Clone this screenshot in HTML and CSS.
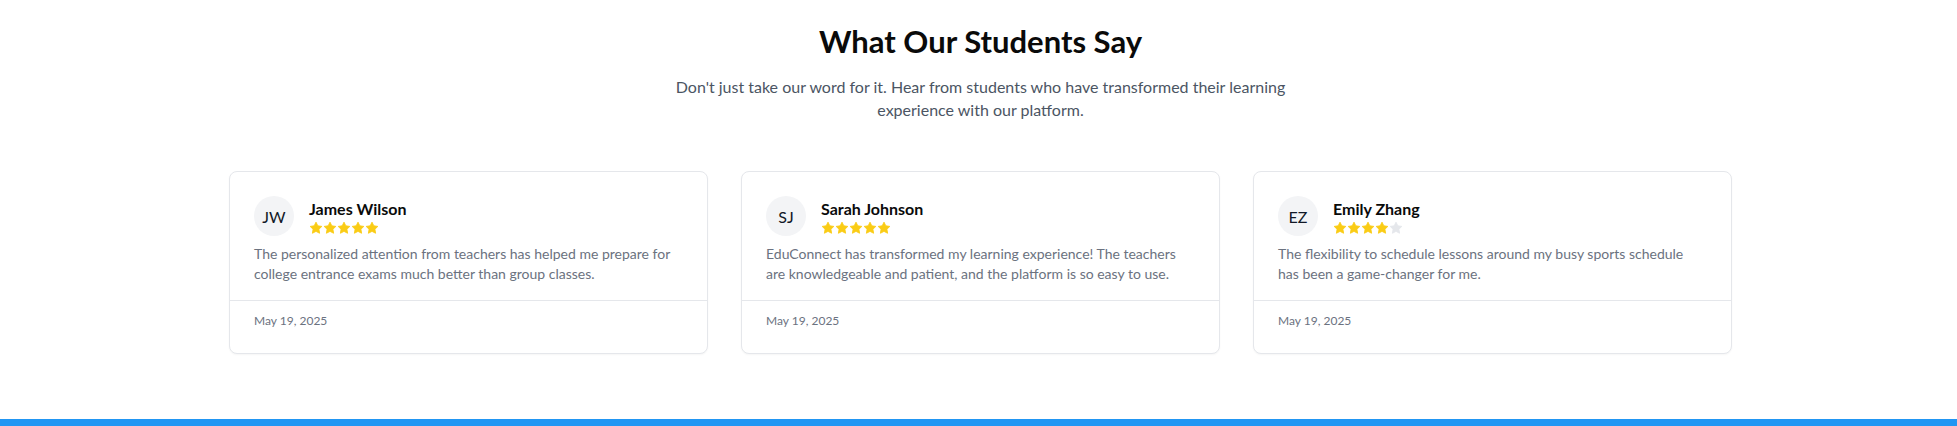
FILE: index.html
```html
<!DOCTYPE html>
<html lang="en">
<head>
<meta charset="utf-8">
<title>What Our Students Say</title>
<link rel="stylesheet" href="styles.css">
</head>
<body>
<svg width="0" height="0" class="defs" aria-hidden="true">
  <defs>
    <path id="star" d="M12 2l3.09 6.26L22 9.27l-5 4.87 1.18 6.88L12 17.77l-6.18 3.25L7 14.14 2 9.27l6.91-1.01L12 2z"/>
  </defs>
</svg>
<section class="testimonials">
  <h2 class="title">What Our Students Say</h2>
  <p class="subtitle">Don't just take our word for it. Hear from students who have transformed their learning experience with our platform.</p>
  <div class="grid">
    <article class="card">
      <div class="card-body">
        <div class="head">
          <div class="avatar">JW</div>
          <div class="who">
            <div class="name">James Wilson</div>
            <div class="stars">
              <svg class="star on" viewBox="0 0 24 24"><use href="#star"/></svg>
              <svg class="star on" viewBox="0 0 24 24"><use href="#star"/></svg>
              <svg class="star on" viewBox="0 0 24 24"><use href="#star"/></svg>
              <svg class="star on" viewBox="0 0 24 24"><use href="#star"/></svg>
              <svg class="star on" viewBox="0 0 24 24"><use href="#star"/></svg>
            </div>
          </div>
        </div>
        <p class="quote">The personalized attention from teachers has helped me prepare for college entrance exams much better than group classes.</p>
      </div>
      <div class="card-foot">May 19, 2025</div>
    </article>
    <article class="card">
      <div class="card-body">
        <div class="head">
          <div class="avatar">SJ</div>
          <div class="who">
            <div class="name">Sarah Johnson</div>
            <div class="stars">
              <svg class="star on" viewBox="0 0 24 24"><use href="#star"/></svg>
              <svg class="star on" viewBox="0 0 24 24"><use href="#star"/></svg>
              <svg class="star on" viewBox="0 0 24 24"><use href="#star"/></svg>
              <svg class="star on" viewBox="0 0 24 24"><use href="#star"/></svg>
              <svg class="star on" viewBox="0 0 24 24"><use href="#star"/></svg>
            </div>
          </div>
        </div>
        <p class="quote">EduConnect has transformed my learning experience! The teachers are knowledgeable and patient, and the platform is so easy to use.</p>
      </div>
      <div class="card-foot">May 19, 2025</div>
    </article>
    <article class="card">
      <div class="card-body">
        <div class="head">
          <div class="avatar">EZ</div>
          <div class="who">
            <div class="name">Emily Zhang</div>
            <div class="stars">
              <svg class="star on" viewBox="0 0 24 24"><use href="#star"/></svg>
              <svg class="star on" viewBox="0 0 24 24"><use href="#star"/></svg>
              <svg class="star on" viewBox="0 0 24 24"><use href="#star"/></svg>
              <svg class="star on" viewBox="0 0 24 24"><use href="#star"/></svg>
              <svg class="star off" viewBox="0 0 24 24"><use href="#star"/></svg>
            </div>
          </div>
        </div>
        <p class="quote">The flexibility to schedule lessons around my busy sports schedule has been a game-changer for me.</p>
      </div>
      <div class="card-foot">May 19, 2025</div>
    </article>
  </div>
</section>
<footer class="footer"></footer>
</body>
</html>
```
FILE: styles.css
```css
* { box-sizing: border-box; }
html, body { margin: 0; padding: 0; background: #ffffff; }
body {
  font-family: Lato, "Open Sans", "Liberation Sans", sans-serif;
  color: #111827;
  overflow: hidden;
}
.defs { position: absolute; width: 0; height: 0; }

.testimonials {
  padding: 23px 0 65px 4px;
  display: flex;
  flex-direction: column;
  align-items: center;
}
.title {
  margin: 0;
  font-size: 31px;
  line-height: 36px;
  font-weight: 700;
  color: #0a0a0a;
}
.subtitle {
  margin: 17px 0 0;
  max-width: 640px;
  text-align: center;
  font-size: 16px;
  line-height: 22.5px;
  color: #4b5563;
}
.grid {
  margin-top: 50px;
  width: 1503px;
  display: grid;
  grid-template-columns: repeat(3, 1fr);
  gap: 33px;
}
.card {
  border: 1px solid #e5e7eb;
  border-radius: 8px;
  background: #fff;
  box-shadow: 0 1px 2px rgba(0,0,0,0.04);
  display: flex;
  flex-direction: column;
}
.card-body { padding: 24px 24px 16px; }
.head { display: flex; align-items: center; gap: 15px; }
.avatar {
  width: 40px;
  height: 40px;
  border-radius: 50%;
  background: #f3f4f6;
  display: flex;
  align-items: center;
  justify-content: center;
  font-size: 16px;
  color: #111827;
}
.who { display: flex; flex-direction: column; }
.name {
  font-size: 16px;
  line-height: 24px;
  font-weight: 700;
  color: #0a0a0a;
}
.stars { display: flex; height: 14px; }
.star { width: 14px; height: 14px; overflow: visible; }
.star.on { fill: #facc15; stroke: #facc15; stroke-width: 1.5; stroke-linejoin: round; }
.star.off { fill: #e5e7eb; stroke: #e5e7eb; stroke-width: 1.5; stroke-linejoin: round; }
.quote {
  margin: 8px 0 0;
  font-size: 14px;
  line-height: 20px;
  color: #6b7280;
}
.card-foot {
  border-top: 1px solid #e5e7eb;
  padding: 12px 24px 24px;
  font-size: 12px;
  line-height: 16px;
  color: #6b7280;
}
.footer {
  height: 8px;
  background: #2196f3;
}
```
